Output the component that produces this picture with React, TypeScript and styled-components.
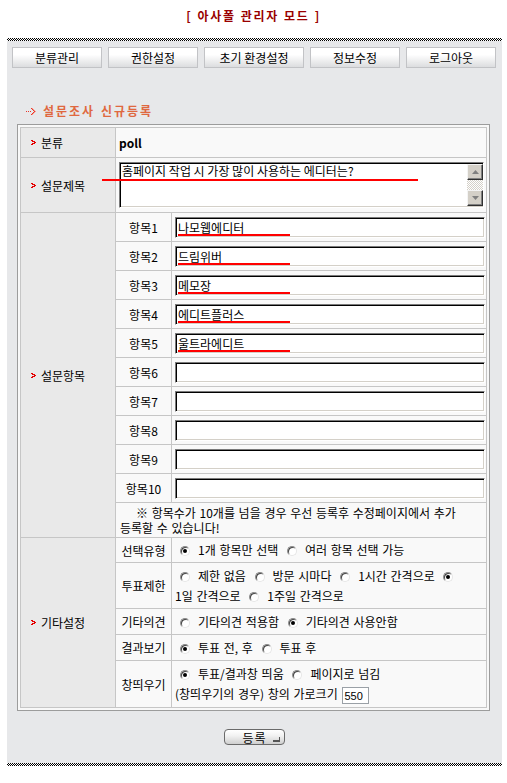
import React from 'react';
import styled, { createGlobalStyle } from 'styled-components';

const GlobalStyle = createGlobalStyle`
  html, body {
    margin: 0;
    padding: 0;
    background: #fff;
  }
  body {
    font-family: "Noto Sans CJK KR", "Noto Sans", sans-serif;
    font-size: 12px;
    color: #000;
    word-spacing: 1px;
  }
  * {
    box-sizing: border-box;
  }
`;

const Page = styled.div`
  width: 507px;
  padding-top: 8px;
`;

const Title = styled.h1`
  margin: 0;
  height: 30px;
  text-align: center;
  font-size: 12px;
  line-height: 16px;
  font-weight: bold;
  letter-spacing: 1.6px;
  color: #990000;
`;

const Panel = styled.div`
  margin-left: 7px;
  width: 495px;
  background: #e7e8ea;
`;

const Dotted = styled.div`
  height: 3px;
  background-color: #fff;
  background-image: repeating-conic-gradient(#000 0 25%, transparent 0 50%);
  background-size: 2px 2px;
`;

const NavBar = styled.div`
  display: flex;
  gap: 6px;
  padding: 6px 0 0 5px;
`;

const NavButton = styled.button<{ $w: number }>`
  width: ${p => p.$w}px;
  height: 21px;
  padding: 0;
  border: 1px solid #c2c3c6;
  background: linear-gradient(#fff 0%, #fff 35%, #dcdddf 100%);
  font-family: inherit;
  font-size: 12px;
  line-height: 19px;
  color: #000;
`;

const Heading = styled.h2`
  display: flex;
  align-items: center;
  gap: 7px;
  margin: 36px 0 0 19px;
  height: 14px;
  font-size: 12px;
  line-height: 14px;
  font-weight: bold;
  letter-spacing: 2px;
  color: #df6840;
`;

const FormFrame = styled.div`
  position: relative;
  margin: 6px 0 0 10px;
  width: 473px;
  border: 1px solid #9c9c9c;
  padding: 2px;
  background: #f8f8f8;
`;

const TitleMark = styled.span`
  position: absolute;
  left: 84px;
  top: 54px;
  width: 316px;
  height: 2px;
  background: #f00;
`;

const FormGrid = styled.div`
  display: grid;
  grid-template-columns: 94px 55px 1fr;
  grid-template-rows: 29px 54px repeat(10, 28px) 34px 24px 45px 25px 25px 46px;
  gap: 1px;
  background: #c6c6c6;
  border: 1px solid #c6c6c6;
`;

const MainLabel = styled.div<{ $row: number; $span: number }>`
  grid-column: 1;
  grid-row: ${p => p.$row} / span ${p => p.$span};
  display: flex;
  align-items: center;
  gap: 5px;
  padding-left: 10px;
  background: #e9e9e9;
`;

const ValueCell = styled.div`
  grid-column: 2 / 4;
  display: flex;
  align-items: center;
  padding: 0 2px 0 3px;
  background: #f9f9f9;
`;

const PollName = styled.b`
  font-weight: bold;
`;

const SubLabel = styled.div`
  grid-column: 2;
  display: flex;
  align-items: center;
  justify-content: center;
  background: #f9f9f9;
  white-space: nowrap;
`;

const InputCell = styled.div`
  grid-column: 3;
  display: flex;
  align-items: center;
  padding: 1px 1px 0 3px;
  background: #f9f9f9;
`;

const InputWrap = styled.div`
  position: relative;
  width: 100%;
`;

const insetBorder = `
  border: 1px solid;
  border-color: #7a7a7a #fff #fff #7a7a7a;
  box-shadow: inset 1px 1px 0 #000, inset -1px -1px 0 #d4d0c8;
  background: #fff;
`;

const ItemInput = styled.input`
  display: block;
  width: 100%;
  height: 21px;
  padding: 0 2px;
  ${insetBorder}
  font-family: inherit;
  font-size: 12px;
  line-height: 17px;
  color: #000;
  outline: none;
`;

const ItemMark = styled.span`
  position: absolute;
  left: 3px;
  bottom: 2px;
  width: 112px;
  height: 2px;
  background: #f00;
`;

const TitleBox = styled.div`
  display: flex;
  width: 100%;
  height: 46px;
  ${insetBorder}
`;

const TitleText = styled.textarea`
  flex: 1;
  margin: 1px 0 0 1px;
  padding: 0 1px;
  border: none;
  resize: none;
  overflow: hidden;
  background: transparent;
  font-family: inherit;
  font-size: 12px;
  line-height: 14px;
  color: #000;
  outline: none;
`;

const Scrollbar = styled.div`
  display: flex;
  flex-direction: column;
  width: 16px;
  margin: 1px 0 1px 0;
`;

const ScrollButton = styled.div`
  display: flex;
  align-items: center;
  justify-content: center;
  height: 16px;
  background: #d4d0c8;
  border: 1px solid;
  border-color: #f4f4f4 #303030 #303030 #f4f4f4;
  box-shadow: inset -1px -1px 0 #808080;
`;

const ScrollTrack = styled.div`
  flex: 1;
  background-color: #fff;
  background-image: repeating-conic-gradient(#d4d0c8 0 25%, transparent 0 50%);
  background-size: 2px 2px;
`;

const NoteCell = styled.div`
  grid-column: 2 / 4;
  display: flex;
  align-items: center;
  padding: 0 4px;
  background: #f9f9f9;
  line-height: 15px;
`;

const NoteLine = styled.div<{ $indent?: boolean }>`
  padding-left: ${p => (p.$indent ? '16px' : '0')};
  white-space: nowrap;
`;

const OptionCell = styled.div`
  grid-column: 3;
  display: flex;
  align-items: center;
  padding-left: 3px;
  background: #f9f9f9;
  line-height: 20px;
  white-space: nowrap;
`;

const Radio = styled.span<{ $on?: boolean }>`
  display: inline-block;
  position: relative;
  width: 10px;
  height: 10px;
  margin: 0 8px 0 5px;
  vertical-align: -1px;
  border-radius: 50%;
  border: 1px solid;
  border-color: #8a8a8a #e6e6e6 #e6e6e6 #8a8a8a;
  box-shadow: inset 1px 1px 0 #444;
  background: #fff;

  &::after {
    content: '';
    display: ${p => (p.$on ? 'block' : 'none')};
    position: absolute;
    left: 2px;
    top: 2px;
    width: 4px;
    height: 4px;
    border-radius: 50%;
    background: #000;
  }
`;

const WidthInput = styled.input`
  width: 27px;
  height: 17px;
  margin-left: 1px;
  padding: 0 1px;
  vertical-align: middle;
  border: 1px solid #9aa0a6;
  background: #fff;
  font-family: "Liberation Sans", sans-serif;
  font-size: 11px;
  line-height: 12px;
  color: #000;
  outline: none;
`;

const SubmitRow = styled.div`
  display: flex;
  justify-content: center;
  padding: 18px 0;
`;

const SubmitButton = styled.button`
  position: relative;
  width: 61px;
  height: 16px;
  padding: 0;
  border: 1px solid #6a6a6a;
  border-radius: 4px;
  background: linear-gradient(#fff 0%, #f2f2f2 40%, #cfcfcf 100%);
  font-family: inherit;
  font-size: 12px;
  line-height: 13px;
  letter-spacing: 1px;
  color: #000;

  &::after {
    content: '';
    position: absolute;
    right: 4px;
    bottom: 2px;
    width: 6px;
    height: 3px;
    border-right: 1px solid #555;
    border-bottom: 2px solid #555;
  }
`;

const Marker = () => (
  <svg width="5" height="5" viewBox="0 0 5 5">
    <path
      fill="#e40000"
      d="M0 0h2v1H0zM1 1h3v1H1zM3 2h2v1H3zM1 3h3v1H1zM0 4h2v1H0z"
    />
  </svg>
);

const HeadArrow = () => (
  <svg width="10" height="7" viewBox="0 0 10 7">
    <path
      fill="#e8372b"
      d="M0 3h1v1H0zM2 3h1v1H2zM4 3h1v1H4zM5 0h1v1H5zM6 1h1v1H6zM7 2h1v1H7zM8 3h1v1H8zM7 4h1v1H7zM6 5h1v1H6zM5 6h1v1H5z"
    />
    <path
      fill="#f59a8c"
      d="M6 0h1v1H6zM7 1h1v1H7zM8 2h1v1H8zM9 3h1v1H9zM8 4h1v1H8zM7 5h1v1H7zM6 6h1v1H6z"
    />
  </svg>
);

const ArrowUp = () => (
  <svg width="7" height="4" viewBox="0 0 7 4">
    <path fill="#808080" d="M3.5 0L7 4H0z" />
  </svg>
);

const ArrowDown = () => (
  <svg width="7" height="4" viewBox="0 0 7 4">
    <path fill="#808080" d="M0 0h7L3.5 4z" />
  </svg>
);

const navItems = [
  { label: '분류관리', w: 90 },
  { label: '권한설정', w: 90 },
  { label: '초기 환경설정', w: 100 },
  { label: '정보수정', w: 90 },
  { label: '로그아웃', w: 90 },
];

const pollItems = ['나모웹에디터', '드림위버', '메모장', '에디트플러스', '울트라에디트', '', '', '', '', ''];

export default function App() {
  return (
    <>
      <GlobalStyle />
      <Page>
        <Title>[ 아사폴 관리자 모드 ]</Title>
        <Panel>
          <Dotted />
          <NavBar>
            {navItems.map(item => (
              <NavButton key={item.label} $w={item.w}>
                {item.label}
              </NavButton>
            ))}
          </NavBar>

          <Heading>
            <HeadArrow />
            설문조사 신규등록
          </Heading>

          <FormFrame>
            <FormGrid>
              <MainLabel $row={1} $span={1}>
                <Marker />
                분류
              </MainLabel>
              <ValueCell>
                <PollName>poll</PollName>
              </ValueCell>

              <MainLabel $row={2} $span={1}>
                <Marker />
                설문제목
              </MainLabel>
              <ValueCell>
                <TitleBox>
                  <TitleText defaultValue="홈페이지 작업 시 가장 많이 사용하는 에디터는?" />
                  <Scrollbar>
                    <ScrollButton>
                      <ArrowUp />
                    </ScrollButton>
                    <ScrollTrack />
                    <ScrollButton>
                      <ArrowDown />
                    </ScrollButton>
                  </Scrollbar>
                </TitleBox>
              </ValueCell>

              <MainLabel $row={3} $span={11}>
                <Marker />
                설문항목
              </MainLabel>
              {pollItems.map((value, i) => (
                <React.Fragment key={i}>
                  <SubLabel>항목{i + 1}</SubLabel>
                  <InputCell>
                    <InputWrap>
                      <ItemInput defaultValue={value} />
                      {value && <ItemMark />}
                    </InputWrap>
                  </InputCell>
                </React.Fragment>
              ))}
              <NoteCell>
                <div>
                  <NoteLine $indent>※ 항목수가 10개를 넘을 경우 우선 등록후 수정페이지에서 추가</NoteLine>
                  <NoteLine>등록할 수 있습니다!</NoteLine>
                </div>
              </NoteCell>

              <MainLabel $row={14} $span={5}>
                <Marker />
                기타설정
              </MainLabel>

              <SubLabel>선택유형</SubLabel>
              <OptionCell>
                <div>
                  <Radio $on />1개 항목만 선택 <Radio />여러 항목 선택 가능
                </div>
              </OptionCell>

              <SubLabel>투표제한</SubLabel>
              <OptionCell>
                <div>
                  <Radio />제한 없음 <Radio />방문 시마다 <Radio />1시간 간격으로 <Radio $on />
                  <br />
                  1일 간격으로 <Radio />1주일 간격으로
                </div>
              </OptionCell>

              <SubLabel>기타의견</SubLabel>
              <OptionCell>
                <div>
                  <Radio />기타의견 적용함 <Radio $on />기타의견 사용안함
                </div>
              </OptionCell>

              <SubLabel>결과보기</SubLabel>
              <OptionCell>
                <div>
                  <Radio $on />투표 전, 후 <Radio />투표 후
                </div>
              </OptionCell>

              <SubLabel>창띄우기</SubLabel>
              <OptionCell>
                <div>
                  <Radio $on />투표/결과창 띄움 <Radio />페이지로 넘김
                  <br />
                  (창띄우기의 경우) 창의 가로크기 <WidthInput defaultValue="550" />
                </div>
              </OptionCell>
            </FormGrid>
            <TitleMark />
          </FormFrame>

          <SubmitRow>
            <SubmitButton>등록</SubmitButton>
          </SubmitRow>
          <Dotted />
        </Panel>
      </Page>
    </>
  );
}
